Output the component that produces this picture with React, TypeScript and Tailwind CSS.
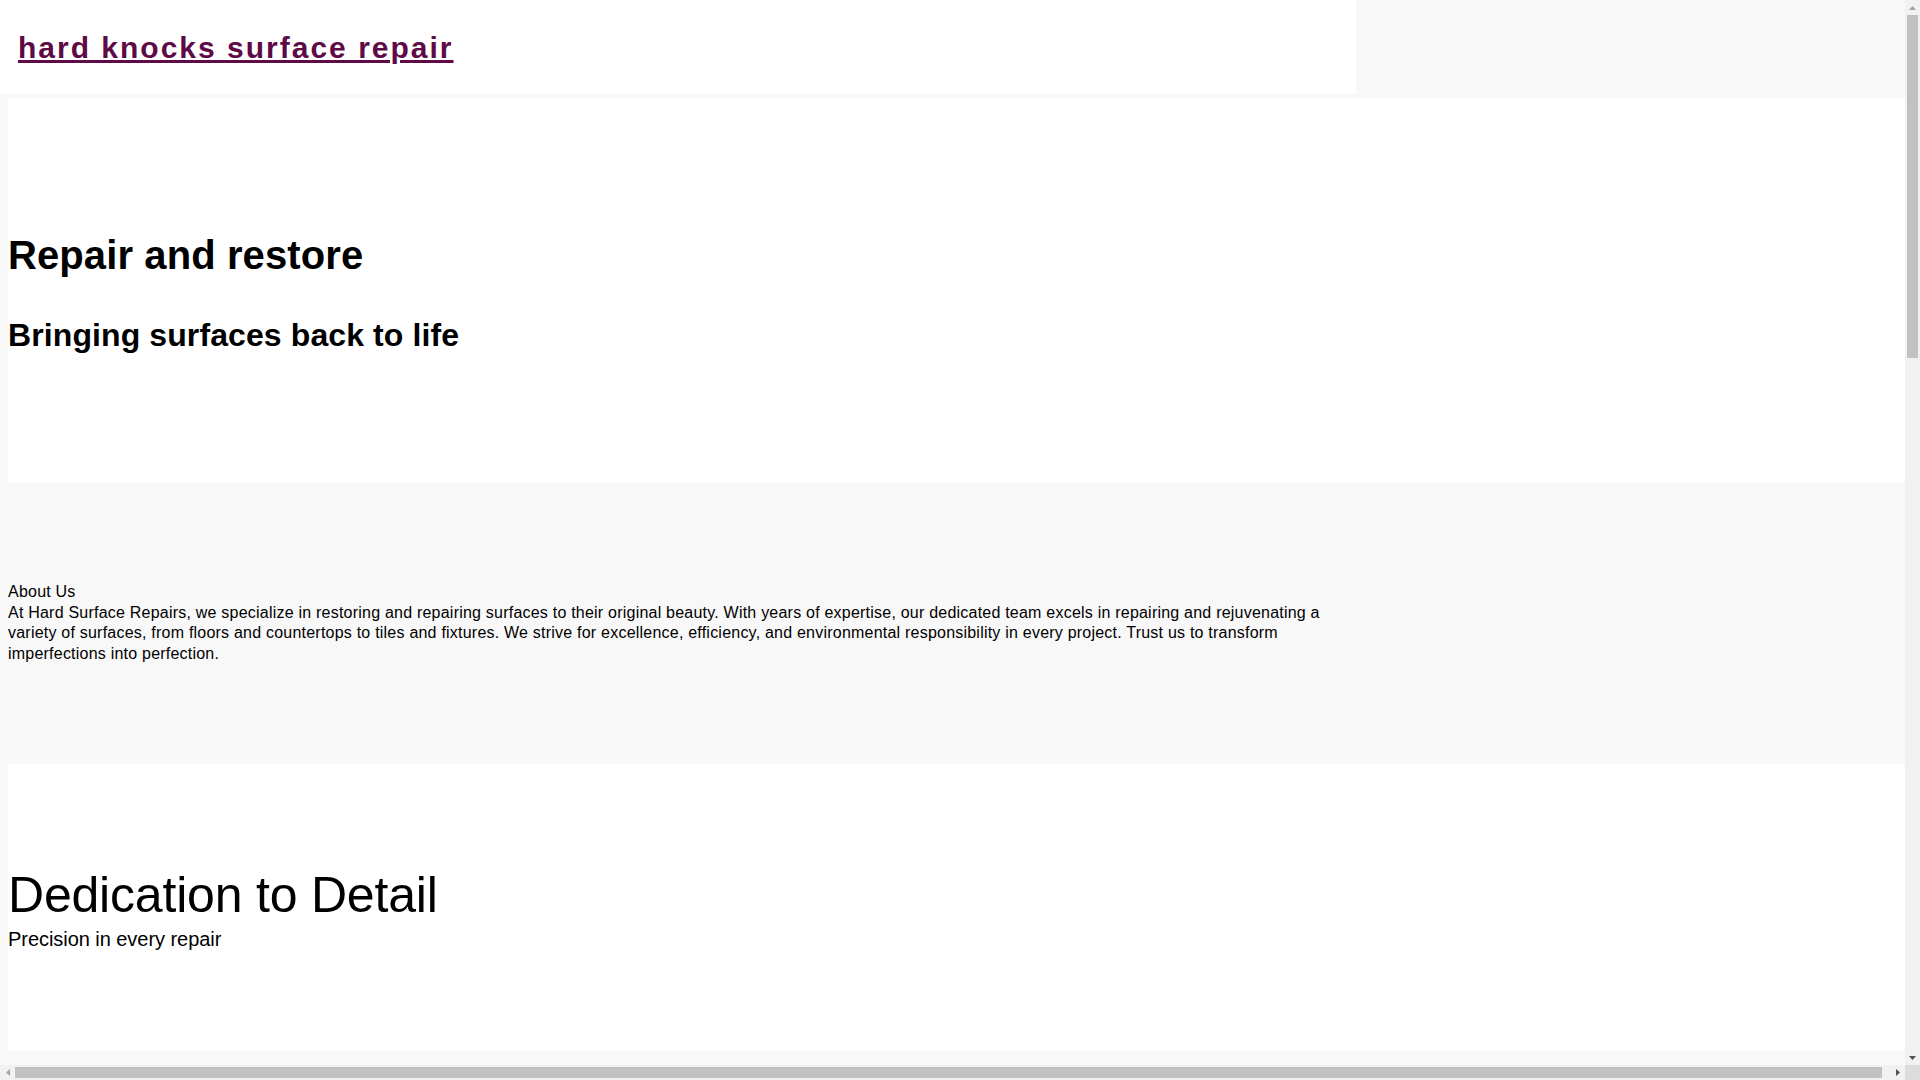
import React from "react"

const sans = "font-['Liberation_Sans',Arial,Helvetica,sans-serif]"

interface TextBlockProps {
  title: string
  body: string
}

function TextBlock({ title, body }: TextBlockProps) {
  return (
    <section className="ml-2 w-[1355px] py-[100px] text-[16px] leading-[20.5px] tracking-[0.22px] text-black">
      <div>{title}</div>
      <p>{body}</p>
    </section>
  )
}

interface FeatureProps {
  title: string
  tagline: string
}

function Feature({ title, tagline }: FeatureProps) {
  return (
    <section className="ml-2 w-full bg-white pt-[103px] pb-[100px] text-black">
      <h2 className="text-[50px] leading-[57.5px] font-normal tracking-[-0.2px]">{title}</h2>
      <p className="mt-[3px] text-[20px] leading-[23px] tracking-[-0.05px]">{tagline}</p>
    </section>
  )
}

// window scrollbars as they show in the picture
function Arrow({ dir, color }: { dir: "up" | "down" | "left" | "right"; color: string }) {
  const points = {
    up: "0,4 7,4 3.5,0",
    down: "0,0 7,0 3.5,4",
    left: "4,0 4,7 0,3.5",
    right: "0,0 0,7 4,3.5",
  }[dir]
  const vertical = dir === "up" || dir === "down"
  return (
    <div className="w-[15px] h-[15px] flex items-center justify-center shrink-0">
      <svg width={vertical ? 7 : 4} height={vertical ? 4 : 7}>
        <polygon points={points} fill={color} />
      </svg>
    </div>
  )
}

function Scrollbars() {
  return (
    <>
      <div className="fixed top-0 right-0 w-[15px] h-[1065px] bg-[#f1f1f1] flex flex-col">
        <Arrow dir="up" color="#a3a3a3" />
        <div className="flex-1">
          <div className="mx-[2px] h-[343px] bg-[#c1c1c1]" />
        </div>
        <Arrow dir="down" color="#505050" />
      </div>
      <div className="fixed bottom-0 left-0 w-[1905px] h-[15px] bg-[#f1f1f1] flex">
        <Arrow dir="left" color="#a3a3a3" />
        <div className="flex-1 py-[2px]">
          <div className="w-[1867px] h-full bg-[#c1c1c1]" />
        </div>
        <Arrow dir="right" color="#505050" />
      </div>
      <div className="fixed bottom-0 right-0 w-[15px] h-[15px] bg-[#dcdcdc]" />
    </>
  )
}

export default function App() {
  return (
    <div className={`min-h-screen bg-[#f8f8f8] ${sans}`}>
      {/* Header */}
      <header className="h-[98px]">
        <div className="w-[1356px] h-[94px] bg-white pl-[18px] pt-[31px]">
          <a
            href="#"
            className="text-[30px] leading-[34.5px] font-bold tracking-[2px] text-[#5d0a46] underline"
          >
            hard knocks surface repair
          </a>
        </div>
      </header>

      {/* Hero */}
      <section className="ml-2 w-full bg-white pt-[134px] pb-[128px] text-black">
        <h1 className="text-[40px] leading-[46px] font-bold tracking-[0.1px]">Repair and restore</h1>
        <h2 className="mt-[39px] text-[32px] leading-[37px] font-bold tracking-[0.1px]">
          Bringing surfaces back to life
        </h2>
      </section>

      <TextBlock
        title="About Us"
        body="At Hard Surface Repairs, we specialize in restoring and repairing surfaces to their original beauty. With years of expertise, our dedicated team excels in repairing and rejuvenating a variety of surfaces, from floors and countertops to tiles and fixtures. We strive for excellence, efficiency, and environmental responsibility in every project. Trust us to transform imperfections into perfection."
      />

      <Feature title="Dedication to Detail" tagline="Precision in every repair" />

      <div className="h-[2164px]" />

      <Scrollbars />
    </div>
  )
}
